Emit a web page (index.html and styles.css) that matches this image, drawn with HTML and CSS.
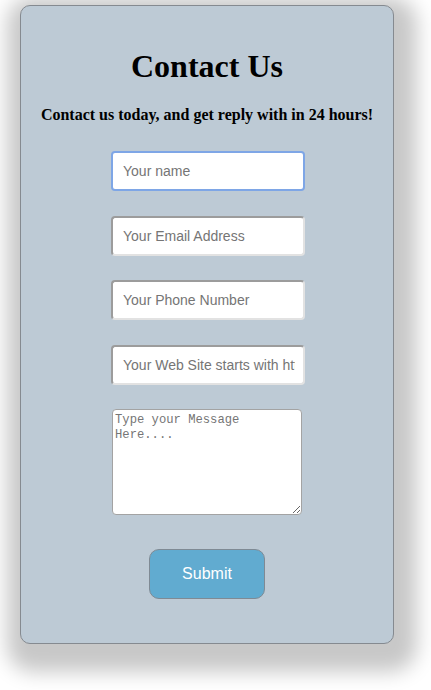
FILE: index.html
```html
<!DOCTYPE html>
<html lang="en">
<head>
<meta charset="utf-8">
<title>Contact Us</title>
<link rel="stylesheet" href="styles.css">
</head>
<body>
<div class="card">
  <h1 class="title">Contact Us</h1>
  <h4 class="subtitle">Contact us today, and get reply with in 24 hours!</h4>
  <form class="form">
    <input class="field field-focus" type="text" placeholder="Your name">
    <input class="field" type="email" placeholder="Your Email Address">
    <input class="field" type="tel" placeholder="Your Phone Number">
    <input class="field" type="url" placeholder="Your Web Site starts with http://">
    <textarea class="message" placeholder="Type your Message Here...."></textarea>
    <button class="submit" type="button">Submit</button>
  </form>
</div>
</body>
</html>
```
FILE: styles.css
```css
html, body {
  margin: 0;
  padding: 0;
  background: #ffffff;
}
body {
  width: 431px;
  height: 690px;
  overflow: hidden;
  font-family: "Liberation Serif", "Times New Roman", serif;
}
.card {
  box-sizing: border-box;
  width: 374px;
  height: 639px;
  margin: 5px 0 0 20px;
  background: #bdcad5;
  border: 1px solid #858a90;
  border-radius: 10px;
  box-shadow: 5px 10px 20px 18px #c8c8c8;
  display: flex;
  flex-direction: column;
  align-items: center;
}
.title {
  margin: 42px 0 0;
  font-size: 32px;
  line-height: 36px;
  font-weight: bold;
  color: #000;
}
.subtitle {
  margin: 22px 0 0;
  font-size: 16px;
  line-height: 18px;
  font-weight: bold;
  color: #000;
}
.form {
  margin-top: 27px;
  display: flex;
  flex-direction: column;
  align-items: center;
  gap: 24.5px;
}
.field {
  box-sizing: border-box;
  width: 194px;
  height: 40px;
  margin: 0;
  padding: 0 8px 0 10px;
  border-style: solid;
  border-width: 2px;
  border-top-color: #9c9c9c;
  border-left-color: #9c9c9c;
  border-bottom-color: #e2e2e2;
  border-right-color: #e2e2e2;
  border-radius: 4px;
  background: #ffffff;
  font-family: "Liberation Sans", Arial, sans-serif;
  font-size: 14px;
  color: #000;
  outline: none;
  position: relative;
  left: 1px;
}
.field::placeholder {
  color: #757575;
}
.field-focus {
  border: 2px solid #7ea6e6;
}
.message {
  box-sizing: border-box;
  width: 190px;
  height: 106px;
  margin: 0;
  padding: 3px 2px;
  border: 1px solid #a3a3a3;
  border-radius: 4px;
  background: #ffffff;
  font-family: "Liberation Mono", "Courier New", monospace;
  font-size: 12.2px;
  line-height: 15px;
  resize: both;
  outline: none;
}
.message::placeholder {
  color: #757575;
}
.submit {
  box-sizing: border-box;
  width: 116px;
  height: 50px;
  margin-top: 9.5px;
  background: #61abd0;
  border: 1px solid #7f8a94;
  border-radius: 10px;
  color: #ffffff;
  font-family: "Liberation Sans", Arial, sans-serif;
  font-size: 16px;
  cursor: pointer;
}
```
